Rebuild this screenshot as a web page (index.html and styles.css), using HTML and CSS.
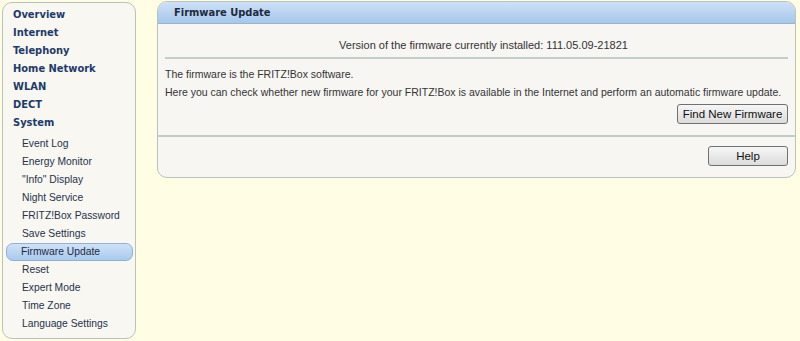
FILE: index.html
```html
<!DOCTYPE html>
<html lang="en">
<head>
    <meta charset="UTF-8">
    <title>FRITZ!Box - Firmware Update</title>
    <link rel="stylesheet" href="styles.css">
</head>
<body>

<div class="page">
    <!-- Navigation -->
    <nav class="menu">
        <a class="main-item" href="#">Overview</a>
        <a class="main-item" href="#">Internet</a>
        <a class="main-item" href="#">Telephony</a>
        <a class="main-item" href="#">Home Network</a>
        <a class="main-item" href="#">WLAN</a>
        <a class="main-item" href="#">DECT</a>
        <a class="main-item" href="#">System</a>
        <div class="sub-menu">
            <a class="sub-item" href="#">Event Log</a>
            <a class="sub-item" href="#">Energy Monitor</a>
            <a class="sub-item" href="#">"Info" Display</a>
            <a class="sub-item" href="#">Night Service</a>
            <a class="sub-item" href="#">FRITZ!Box Password</a>
            <a class="sub-item" href="#">Save Settings</a>
            <a class="sub-item active" href="#">Firmware Update</a>
            <a class="sub-item" href="#">Reset</a>
            <a class="sub-item" href="#">Expert Mode</a>
            <a class="sub-item" href="#">Time Zone</a>
            <a class="sub-item" href="#">Language Settings</a>
        </div>
    </nav>

    <!-- Content -->
    <div class="panel">
        <div class="panel-head">Firmware Update</div>
        <div class="panel-body">
            <p class="version">Version of the firmware currently installed: 111.05.09-21821</p>
            <hr class="rule">
            <p class="text">The firmware is the FRITZ!Box software.</p>
            <p class="text">Here you can check whether new firmware for your FRITZ!Box is available in the Internet and perform an automatic firmware update.</p>
            <div class="actions">
                <button class="btn btn-find">Find New Firmware</button>
            </div>
        </div>
        <div class="panel-foot">
            <button class="btn btn-help">Help</button>
        </div>
    </div>
</div>

</body>
</html>
```

FILE: styles.css
```css
body {
    margin: 0;
    background-color: #fffee4;
    font-family: "Liberation Sans", Arial, sans-serif;
    font-size: 11px;
    color: #333;
}
.page {
    display: flex;
    align-items: flex-start;
    padding: 1px 3px 0 2px;
}

/* menu */
.menu {
    width: 132px;
    height: 332px;
    margin-top: 1px;
    padding-top: 3px;
    background-color: #f8f7f2;
    border: 1px solid #b6c4bc;
    border-radius: 10px;
    display: flex;
    flex-direction: column;
}
.main-item {
    display: block;
    height: 18px;
    line-height: 18px;
    padding-left: 10px;
    font-family: "DejaVu Sans Condensed", Tahoma, sans-serif;
    font-weight: bold;
    font-size: 11px;
    color: #1d3a6a;
    text-decoration: none;
}
.sub-menu {
    margin-top: 3px;
    display: flex;
    flex-direction: column;
}
.sub-item {
    display: block;
    height: 18px;
    line-height: 18px;
    margin: 0 2px 0 3px;
    padding-left: 15px;
    border: 1px solid transparent;
    border-width: 0 1px;
    color: #27324a;
    font-size: 10.3px;
    text-decoration: none;
}
.sub-item.active {
    border: 1px solid #8fb1d8;
    height: 16px;
    line-height: 16px;
    padding-left: 14px;
    border-radius: 7px;
    background: linear-gradient(#cfe2f7, #a9c9ee);
    color: #1b2a44;
}

/* panel */
.panel {
    width: 637px;
    margin-left: 21px;
    background-color: #f7f6f2;
    border: 1px solid #b6c4bc;
    border-radius: 10px;
    overflow: hidden;
}
.panel-head {
    height: 21px;
    line-height: 21px;
    padding-left: 16px;
    background: linear-gradient(#cde1f6, #a6c7ec);
    border-bottom: 1px solid #9fb4c8;
    font-family: "DejaVu Sans Condensed", Tahoma, sans-serif;
    font-weight: bold;
    font-size: 11px;
    color: #1d2b40;
}
.panel-body {
    padding: 12px 7px 11px 7px;
}
.version {
    margin: 0;
    line-height: 18px;
    text-align: center;
    padding-left: 14px;
}
.rule {
    margin: 3px 0 6px 0;
    border: none;
    height: 2px;
    background-color: #c3cec9;
}
.text {
    margin: 0;
    line-height: 18px;
    font-size: 10.5px;
}
.actions {
    display: flex;
    justify-content: flex-end;
    margin-top: 3px;
}
.panel-foot {
    border-top: 2px solid #c3cec9;
    padding: 9px 7px 11px 7px;
    display: flex;
    justify-content: flex-end;
}
.btn {
    height: 20px;
    padding: 0;
    font-family: "Liberation Sans", Arial, sans-serif;
    font-size: 11.5px;
    color: #111;
    background: linear-gradient(#f6f6f6, #dcdcdc);
    border: 1px solid #707070;
    border-radius: 3px;
}
.btn-find {
    width: 111px;
}
.btn-help {
    width: 80px;
}
```
